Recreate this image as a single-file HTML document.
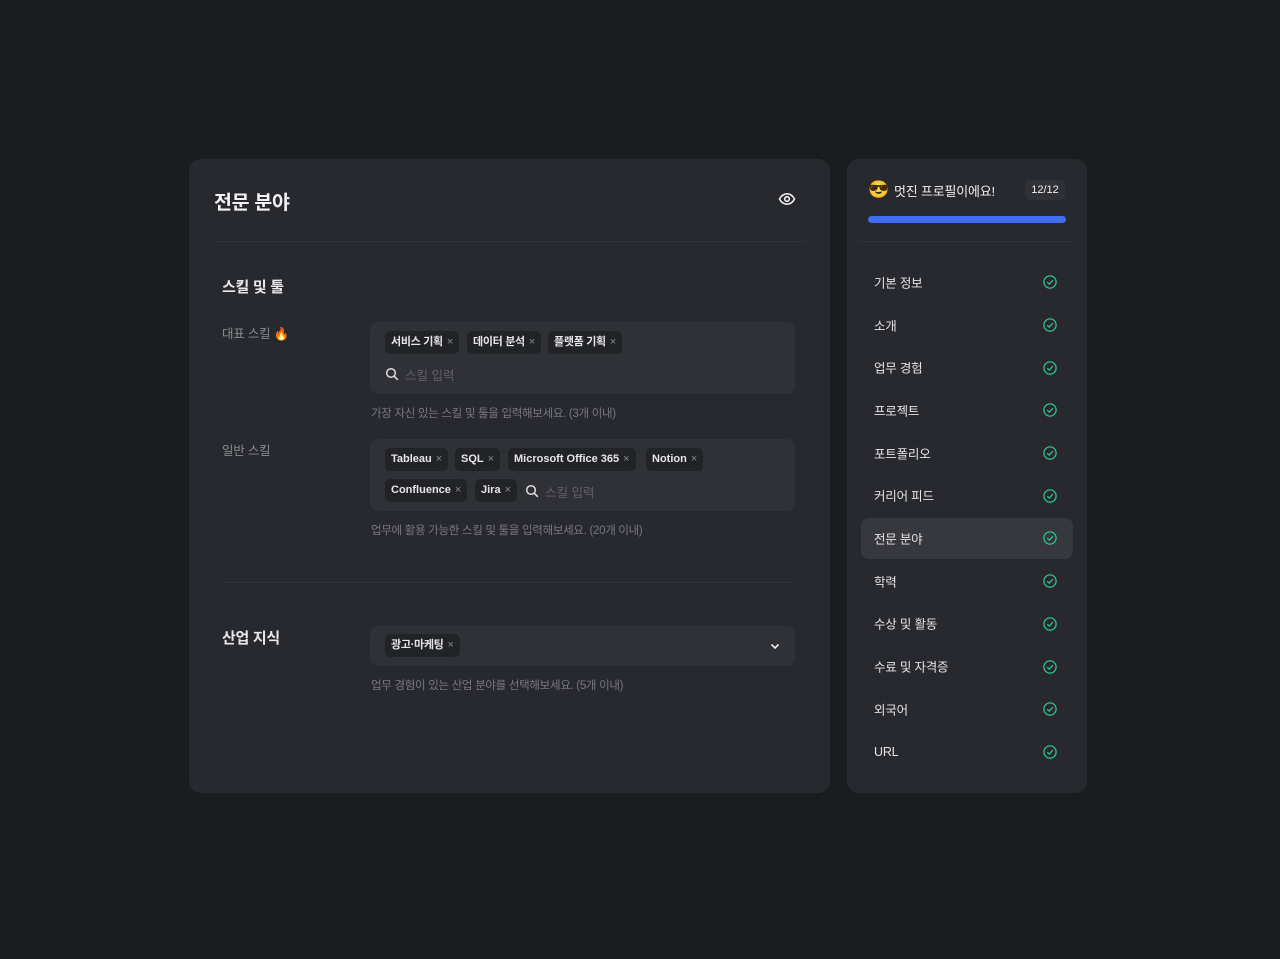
<!DOCTYPE html>
<html><head><meta charset="utf-8"><style>
*{box-sizing:border-box;margin:0;padding:0}
body{width:1280px;height:959px;background:#1b1c1f;font-family:"Liberation Sans","Noto Sans CJK KR",sans-serif;color:#e8e8ea;position:relative;overflow:hidden}
.abs{position:absolute}
.card{position:absolute;background:#28292e;border-radius:12px}
.tag{position:absolute;height:23px;background:#222327;border-radius:5px;font-size:11px;font-weight:bold;color:#e6e6e8;line-height:23px;padding:0 6px;white-space:nowrap;letter-spacing:-0.3px}
.tag.l{letter-spacing:0}
.tag span{color:#88898e;font-weight:normal;margin-left:4px;font-size:11px}
.box{position:absolute;background:#303136;border-radius:8px}
.hint{position:absolute;font-size:11.5px;color:#77787d;letter-spacing:-0.3px}
.lab{position:absolute;font-size:12.5px;color:#8a8b90;letter-spacing:-0.2px}
.ph{position:absolute;font-size:12.5px;color:#5f6065}
.nav{position:absolute;left:874px;font-size:12.5px;color:#e4e4e6;transform:translateY(-50%);letter-spacing:-0.2px}
.chk{position:absolute;left:1043px;width:14px;height:14px;transform:translateY(-50%)}
</style></head><body>
<div class="card" style="left:189px;top:159px;width:641px;height:634px"></div>
<div class="card" style="left:847px;top:159px;width:240px;height:634px"></div>

<div class="abs" style="left:214px;top:186px;font-size:19.5px;font-weight:bold;color:#f2f2f4;letter-spacing:-0.3px">전문 분야</div>
<svg class="abs" style="left:778px;top:191px" width="18" height="16" viewBox="0 0 18 16"><path d="M1.5 8C3.5 4.2 6 2.8 9 2.8S14.5 4.2 16.5 8C14.5 11.8 12 13.2 9 13.2S3.5 11.8 1.5 8Z" fill="none" stroke="#eee" stroke-width="1.6"/><circle cx="9" cy="8" r="2.3" fill="none" stroke="#eee" stroke-width="1.6"/></svg>
<div class="abs" style="left:214px;top:241px;width:590px;height:1px;background:#323338"></div>

<div class="abs" style="left:222px;top:276px;font-size:15px;font-weight:bold;letter-spacing:-0.3px">스킬 및 툴</div>
<div class="lab" style="left:222px;top:323px">대표 스킬 🔥</div>
<div class="box" style="left:370px;top:322px;width:425px;height:72px"></div>
<div class="tag" style="left:385px;top:331px">서비스 기획<span>×</span></div>
<div class="tag" style="left:467px;top:331px">데이터 분석<span>×</span></div>
<div class="tag" style="left:548px;top:331px">플랫폼 기획<span>×</span></div>
<svg class="abs" style="left:385px;top:367px" width="14" height="14" viewBox="0 0 14 14"><circle cx="6" cy="6" r="4.3" fill="none" stroke="#ddd" stroke-width="1.5"/><path d="M9.2 9.2L12.8 12.8" stroke="#ddd" stroke-width="1.6"/></svg>
<div class="ph" style="left:405px;top:365px">스킬 입력</div>
<div class="hint" style="left:371px;top:405px">가장 자신 있는 스킬 및 툴을 입력해보세요. (3개 이내)</div>

<div class="lab" style="left:222px;top:440px">일반 스킬</div>
<div class="box" style="left:370px;top:439px;width:425px;height:72px"></div>
<div class="tag l" style="left:385px;top:448px">Tableau<span>×</span></div>
<div class="tag l" style="left:455px;top:448px">SQL<span>×</span></div>
<div class="tag l" style="left:508px;top:448px">Microsoft Office 365<span>×</span></div>
<div class="tag l" style="left:646px;top:448px">Notion<span>×</span></div>
<div class="tag l" style="left:385px;top:479px">Confluence<span>×</span></div>
<div class="tag l" style="left:475px;top:479px">Jira<span>×</span></div>
<svg class="abs" style="left:525px;top:484px" width="14" height="14" viewBox="0 0 14 14"><circle cx="6" cy="6" r="4.3" fill="none" stroke="#ddd" stroke-width="1.5"/><path d="M9.2 9.2L12.8 12.8" stroke="#ddd" stroke-width="1.6"/></svg>
<div class="ph" style="left:545px;top:482px">스킬 입력</div>
<div class="hint" style="left:371px;top:522px">업무에 활용 가능한 스킬 및 툴을 입력해보세요. (20개 이내)</div>

<div class="abs" style="left:222px;top:582px;width:573px;height:1px;background:#323338"></div>
<div class="abs" style="left:222px;top:627px;font-size:15px;font-weight:bold;letter-spacing:-0.3px">산업 지식</div>
<div class="box" style="left:370px;top:626px;width:425px;height:40px"></div>
<div class="tag" style="left:385px;top:634px">광고·마케팅<span>×</span></div>
<svg class="abs" style="left:769px;top:640px" width="12" height="12" viewBox="0 0 12 12"><path d="M2.5 4.5L6 8L9.5 4.5" fill="none" stroke="#eee" stroke-width="1.6"/></svg>
<div class="hint" style="left:371px;top:677px">업무 경험이 있는 산업 분야를 선택해보세요. (5개 이내)</div>

<div class="abs" style="left:868px;top:180px;font-size:17px;line-height:20px">😎</div>
<div class="abs" style="left:894px;top:181px;font-size:13px;color:#f0f0f2;letter-spacing:-0.2px">멋진 프로필이에요!</div>
<div class="abs" style="left:1025px;top:180px;width:40px;height:20px;background:#303136;border-radius:5px;font-size:11px;line-height:20px;text-align:center;color:#eee">12/12</div>
<div class="abs" style="left:868px;top:216px;width:198px;height:7px;background:#3f6ef0;border-radius:4px"></div>
<div class="abs" style="left:860px;top:241px;width:213px;height:1px;background:#323338"></div>
<div class="abs" style="left:861px;top:518px;width:212px;height:41px;background:#37383e;border-radius:8px"></div>

<div class="nav" style="top:282px">기본 정보</div>
<div class="nav" style="top:325px">소개</div>
<div class="nav" style="top:367px">업무 경험</div>
<div class="nav" style="top:410px">프로젝트</div>
<div class="nav" style="top:453px">포트폴리오</div>
<div class="nav" style="top:495px">커리어 피드</div>
<div class="nav" style="top:538px">전문 분야</div>
<div class="nav" style="top:581px">학력</div>
<div class="nav" style="top:623px">수상 및 활동</div>
<div class="nav" style="top:666px">수료 및 자격증</div>
<div class="nav" style="top:709px">외국어</div>
<div class="nav" style="top:752px">URL</div>

<svg width="0" height="0" style="position:absolute"><defs><g id="c"><circle cx="7" cy="7" r="6.1" fill="none" stroke="#2fc48a" stroke-width="1.3"/><path d="M4.2 7.2L6.2 9.1L9.9 5.2" fill="none" stroke="#2fc48a" stroke-width="1.3"/></g></defs></svg>
<svg class="chk" style="top:282px" viewBox="0 0 14 14"><use href="#c"/></svg>
<svg class="chk" style="top:325px" viewBox="0 0 14 14"><use href="#c"/></svg>
<svg class="chk" style="top:368px" viewBox="0 0 14 14"><use href="#c"/></svg>
<svg class="chk" style="top:410px" viewBox="0 0 14 14"><use href="#c"/></svg>
<svg class="chk" style="top:453px" viewBox="0 0 14 14"><use href="#c"/></svg>
<svg class="chk" style="top:496px" viewBox="0 0 14 14"><use href="#c"/></svg>
<svg class="chk" style="top:538px" viewBox="0 0 14 14"><use href="#c"/></svg>
<svg class="chk" style="top:581px" viewBox="0 0 14 14"><use href="#c"/></svg>
<svg class="chk" style="top:624px" viewBox="0 0 14 14"><use href="#c"/></svg>
<svg class="chk" style="top:667px" viewBox="0 0 14 14"><use href="#c"/></svg>
<svg class="chk" style="top:709px" viewBox="0 0 14 14"><use href="#c"/></svg>
<svg class="chk" style="top:752px" viewBox="0 0 14 14"><use href="#c"/></svg>
</body></html>
